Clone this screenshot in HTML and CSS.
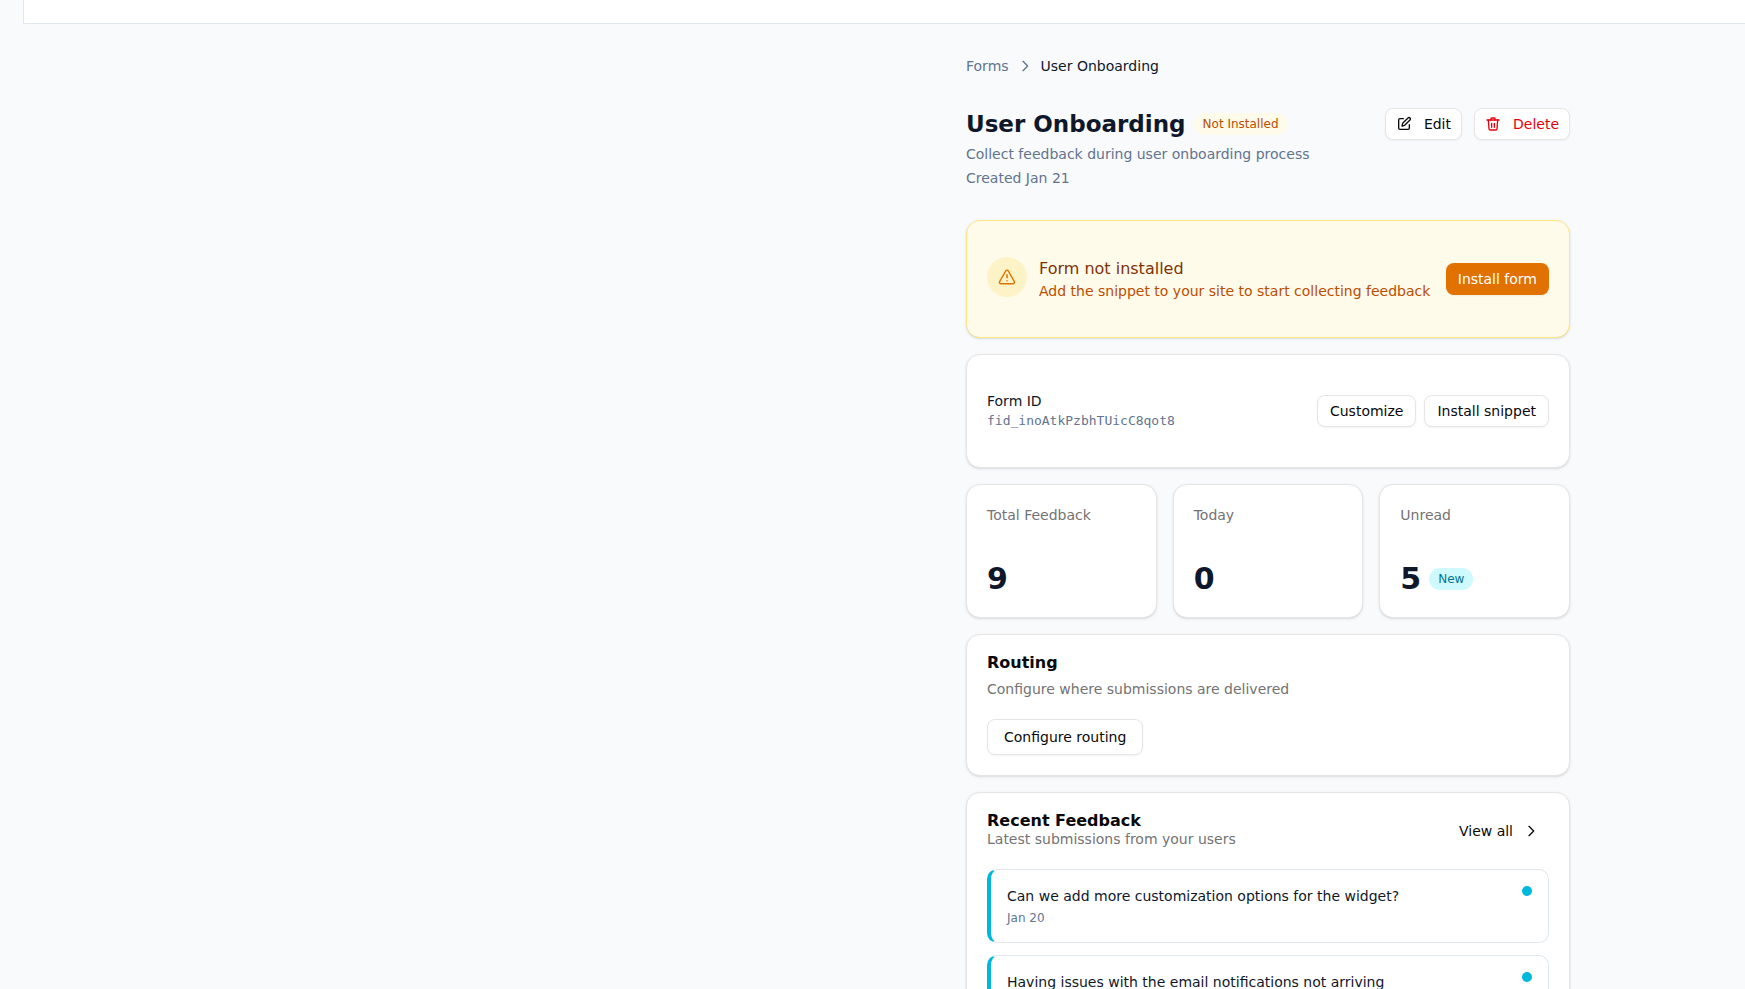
FILE: index.html
```
<!DOCTYPE html>
<html lang="en">
<head>
  <meta charset="UTF-8">
  <meta name="viewport" content="width=device-width, initial-scale=1.0">
  <title>User Onboarding</title>
  <link rel="stylesheet" href="styles.css">
</head>
<body>
  <header class="topbar"></header>

  <main class="page">
    <nav class="breadcrumb" aria-label="Breadcrumb">
      <a href="#">Forms</a>
      <svg class="icon" viewBox="0 0 24 24"><path d="m9 19 7-7-7-7"/></svg>
      <span class="current">User Onboarding</span>
    </nav>

    <section class="heading">
      <div class="heading-row">
        <div class="title">
          <h1>User Onboarding</h1>
          <span class="badge badge-warning">Not Installed</span>
        </div>
        <div class="actions">
          <button type="button" class="btn">
            <svg class="icon" viewBox="0 0 24 24"><path d="M11 4H6a2 2 0 0 0-2 2v12a2 2 0 0 0 2 2h12a2 2 0 0 0 2-2v-5"/><path d="M18 3a2.12 2.12 0 0 1 3 3L13 14l-4 1 1-4z"/></svg>
            Edit
          </button>
          <button type="button" class="btn btn-danger">
            <svg class="icon" viewBox="0 0 24 24"><path d="M3 6h18"/><path d="m19 6-1 13a2 2 0 0 1-2 2H8a2 2 0 0 1-2-2L5 6"/><path d="M9 6V4a1 1 0 0 1 1-1h4a1 1 0 0 1 1 1v2"/><path d="M10 11v6M14 11v6"/></svg>
            Delete
          </button>
        </div>
      </div>
      <p>Collect feedback during user onboarding process</p>
      <p>Created Jan 21</p>
    </section>

    <div class="cards">
      <section class="card card-row card-warning">
        <div class="notice">
          <span class="notice-icon">
            <svg class="icon" viewBox="0 0 24 24"><path d="m21.73 18-8-14a2 2 0 0 0-3.48 0l-8 14A2 2 0 0 0 4 21h16a2 2 0 0 0 1.73-3Z"/><path d="M12 9v4M12 17h.01"/></svg>
          </span>
          <div>
            <h2>Form not installed</h2>
            <p>Add the snippet to your site to start collecting feedback</p>
          </div>
        </div>
        <button type="button" class="btn btn-primary">Install form</button>
      </section>

      <section class="card card-row">
        <div class="form-id">
          <p>Form ID</p>
          <code>fid_inoAtkPzbhTUicC8qot8</code>
        </div>
        <div class="actions actions-tight">
          <button type="button" class="btn">Customize</button>
          <button type="button" class="btn">Install snippet</button>
        </div>
      </section>

      <div class="stats">
        <section class="card stat">
          <p>Total Feedback</p>
          <div class="stat-value">9</div>
        </section>
        <section class="card stat">
          <p>Today</p>
          <div class="stat-value">0</div>
        </section>
        <section class="card stat">
          <p>Unread</p>
          <div class="stat-value">5 <span class="badge badge-new">New</span></div>
        </section>
      </div>

      <section class="card routing">
        <h2>Routing</h2>
        <p>Configure where submissions are delivered</p>
        <button type="button" class="btn btn-large">Configure routing</button>
      </section>

      <section class="card recent">
        <div class="recent-header">
          <div>
            <h2>Recent Feedback</h2>
            <p>Latest submissions from your users</p>
          </div>
          <a href="#" class="btn btn-ghost">
            View all
            <svg class="icon" viewBox="0 0 24 24"><path d="m9 19 7-7-7-7"/></svg>
          </a>
        </div>
        <ul class="feedback-list">
          <li>
            <div>
              <p>Can we add more customization options for the widget?</p>
              <time>Jan 20</time>
            </div>
            <span class="dot"></span>
          </li>
          <li>
            <div>
              <p>Having issues with the email notifications not arriving</p>
            </div>
            <span class="dot"></span>
          </li>
        </ul>
      </section>
    </div>
  </main>
</body>
</html>
```
FILE: styles.css
```
* {
  box-sizing: border-box;
}

body {
  margin: 0;
  font-family: 'DejaVu Sans', sans-serif;
  font-size: 14px;
  line-height: 20px;
  color: #0a0a0a;
  background-color: #f8fafc;
}

h1, h2, p, ul {
  margin: 0;
  padding: 0;
}

.topbar {
  height: 24px;
  margin-left: 23px;
  background-color: #ffffff;
  border-left: 1px solid #e2e8f0;
  border-bottom: 1px solid #e2e8f0;
}

.page {
  max-width: 604px;
  margin: 0 175px 0 auto;
  padding: 32px 0;
}

.icon {
  width: 16px;
  height: 16px;
  flex-shrink: 0;
  fill: none;
  stroke: currentColor;
  stroke-width: 2;
  stroke-linecap: round;
  stroke-linejoin: round;
}

.breadcrumb {
  display: flex;
  align-items: center;
  gap: 8px;
  margin-bottom: 32px;
  color: #62748e;
}

.breadcrumb a {
  color: inherit;
  text-decoration: none;
}

.breadcrumb .current {
  color: #0f172b;
}

.heading {
  display: flex;
  flex-direction: column;
  gap: 4px;
  margin-bottom: 32px;
  color: #62748e;
}

.heading-row {
  display: flex;
  align-items: center;
  justify-content: space-between;
}

.title {
  display: flex;
  align-items: center;
  gap: 8px;
}

h1 {
  font-size: 23px;
  line-height: 32px;
  color: #0f172b;
}

h2 {
  font-size: 16px;
  line-height: 16px;
}

.badge {
  padding: 3px 9px;
  border-radius: 11px;
  font-size: 12px;
  line-height: 16px;
  font-weight: normal;
}

.badge-warning {
  color: #bb4d00;
  background-color: #fffbeb;
}

.badge-new {
  color: #007595;
  background-color: #cefafe;
}

.actions {
  display: flex;
  gap: 12px;
}

.actions-tight {
  gap: 8px;
}

.btn {
  display: inline-flex;
  align-items: center;
  justify-content: center;
  gap: 12px;
  height: 32px;
  padding: 0 12px;
  border: 1px solid #e5e5e5;
  border-radius: 8px;
  background-color: #ffffff;
  box-shadow: 0 1px 2px rgba(0, 0, 0, 0.05);
  color: #0a0a0a;
  font-family: inherit;
  font-size: 14px;
  line-height: 20px;
  white-space: nowrap;
  text-decoration: none;
  cursor: pointer;
}

.btn:has(.icon) {
  padding: 0 10px;
}

.btn-danger {
  color: #e7000b;
}

.btn-primary {
  border: none;
  background-color: #e17100;
  color: #ffffff;
}

.btn-large {
  height: 36px;
  padding: 0 16px;
}

.btn-ghost {
  gap: 10px;
  border: none;
  background-color: transparent;
  box-shadow: none;
}

.cards {
  display: flex;
  flex-direction: column;
  gap: 16px;
}

.card {
  padding: 20px;
  border: 1px solid #e5e5e5;
  border-radius: 14px;
  background-color: #ffffff;
  box-shadow: 0 1px 3px rgba(0, 0, 0, 0.1), 0 1px 2px -1px rgba(0, 0, 0, 0.1);
}

.card-row {
  display: flex;
  align-items: center;
  justify-content: space-between;
  gap: 12px;
  padding: 36px 20px;
}

.card-warning {
  border-color: #fee685;
  background-color: #fffbeb;
  color: #bb4d00;
}

.card-warning h2 {
  font-weight: normal;
  line-height: 24px;
  color: #7b3306;
}

.notice {
  display: flex;
  align-items: flex-start;
  gap: 12px;
}

.notice-icon {
  display: flex;
  align-items: center;
  justify-content: center;
  width: 40px;
  height: 40px;
  flex-shrink: 0;
  border-radius: 50%;
  background-color: #fef3c6;
  color: #e17100;
}

.notice-icon .icon {
  width: 18px;
  height: 18px;
}

.form-id p {
  color: #0f172b;
}

.form-id code {
  display: block;
  font-family: 'DejaVu Sans Mono', monospace;
  font-size: 13px;
  color: #62748e;
}

.stats {
  display: grid;
  grid-template-columns: repeat(3, 1fr);
  gap: 16px;
}

.stat p, .routing p, .recent-header p {
  color: #737373;
}

.stat-value {
  display: flex;
  align-items: center;
  gap: 8px;
  margin-top: 36px;
  font-size: 30px;
  font-weight: bold;
  line-height: 36px;
  color: #0f172b;
}

.routing p {
  margin: 8px 0 20px;
}

.recent-header {
  display: flex;
  align-items: center;
  justify-content: space-between;
  margin-bottom: 20px;
}

.feedback-list {
  display: flex;
  flex-direction: column;
  gap: 12px;
  list-style: none;
}

.feedback-list li {
  display: flex;
  align-items: flex-start;
  justify-content: space-between;
  padding: 16px;
  border: 1px solid #e2e8f0;
  border-left: 4px solid #00b8db;
  border-radius: 10px;
  color: #0f172b;
}

.feedback-list time {
  display: block;
  margin-top: 4px;
  font-size: 12px;
  line-height: 16px;
  color: #62748e;
}

.dot {
  width: 10px;
  height: 10px;
  border-radius: 50%;
  background-color: #00b8db;
}
```
